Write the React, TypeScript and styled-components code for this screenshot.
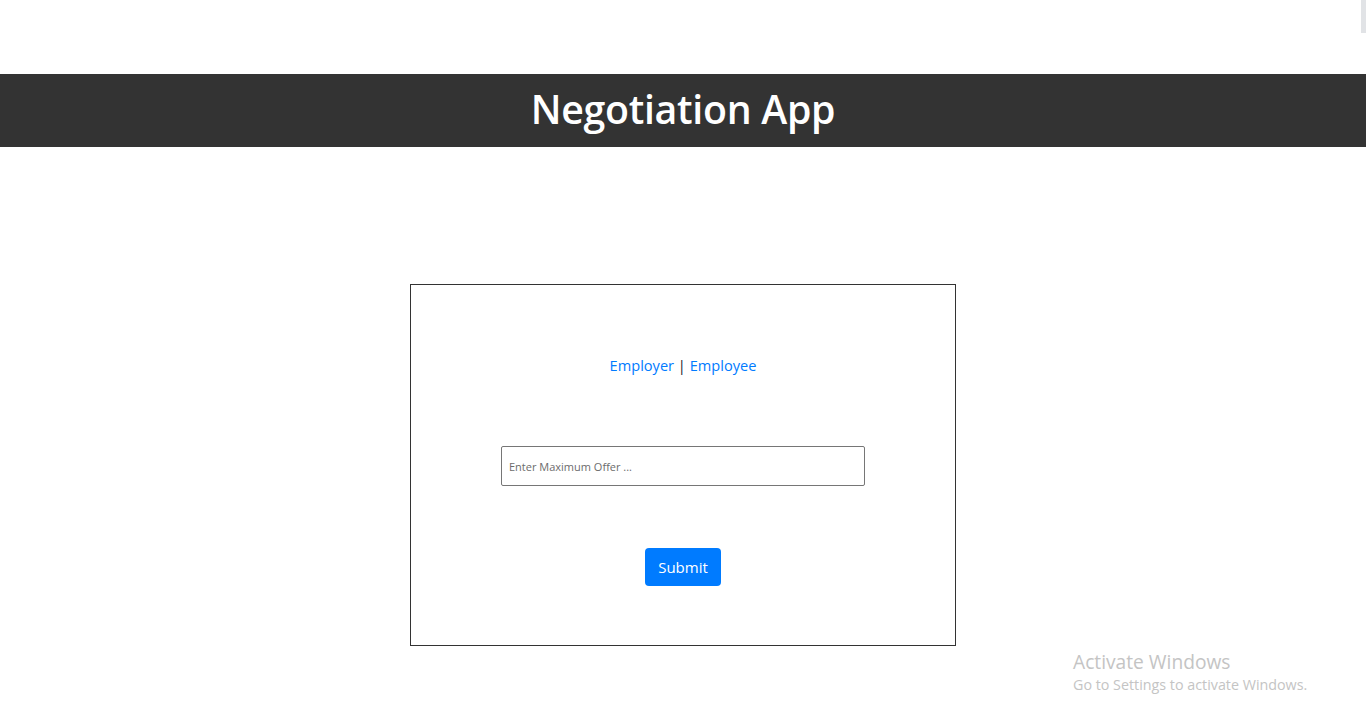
import React from "react";
import styled, { createGlobalStyle } from "styled-components";

const Global = createGlobalStyle`
  html, body { margin: 0; padding: 0; background: #fff; }
  body { font-family: "Open Sans", "Noto Sans", sans-serif; }
  * { box-sizing: border-box; }
`;

const Page = styled.div`
  padding-top: 74px;
  min-height: 728px;
  position: relative;
`;

const Header = styled.header`
  height: 73px;
  background: #333333;
  display: flex;
  align-items: center;
  justify-content: center;
`;

const Title = styled.h1`
  margin: 0 0 4px;
  color: #fff;
  font-family: "Open Sans", sans-serif;
  font-weight: 600;
  font-size: 39.3px;
  letter-spacing: -0.3px;
`;

const Main = styled.main`
  display: flex;
  justify-content: center;
  padding-top: 137px;
`;

const Card = styled.div`
  width: 546px;
  height: 362px;
  border: 1px solid #333;
  display: flex;
  flex-direction: column;
  align-items: center;
  padding-top: 68px;
`;

const Roles = styled.div`
  font-size: 14.6px;
  line-height: 24px;
  color: #212529;
`;

const RoleLink = styled.a`
  color: #007bff;
  text-decoration: none;
`;

const Input = styled.input`
  margin-top: 69px;
  width: 364px;
  height: 40px;
  border: 1px solid #767676;
  border-radius: 2px;
  padding: 0 7px;
  font-family: "Open Sans", sans-serif;
  font-size: 11px;
  &::placeholder { color: #6c6c6c; }
`;

const Button = styled.button`
  margin-top: 62px;
  width: 76px;
  height: 38px;
  border: none;
  border-radius: 4px;
  background: #007bff;
  color: #fff;
  font-family: "Open Sans", sans-serif;
  font-size: 15px;
`;

const Watermark = styled.div`
  position: absolute;
  left: 1073px;
  top: 648px;
  color: #c4c4c4;
  font-family: "Open Sans", sans-serif;
`;

const WmTitle = styled.div`
  font-size: 19.2px;
  line-height: 27px;
`;

const WmSub = styled.div`
  font-size: 14.3px;
  line-height: 20px;
`;

const Thumb = styled.div`
  position: absolute;
  right: 0;
  top: 0;
  width: 5px;
  height: 33px;
  background: #e1e3e6;
`;

export default function App() {
  return (
    <>
      <Global />
      <Page>
        <Thumb />
        <Header>
          <Title>Negotiation App</Title>
        </Header>
        <Main>
          <Card>
            <Roles>
              <RoleLink href="#">Employer</RoleLink> | <RoleLink href="#">Employee</RoleLink>
            </Roles>
            <Input placeholder="Enter Maximum Offer ..." />
            <Button>Submit</Button>
          </Card>
        </Main>
        <Watermark>
          <WmTitle>Activate Windows</WmTitle>
          <WmSub>Go to Settings to activate Windows.</WmSub>
        </Watermark>
      </Page>
    </>
  );
}
